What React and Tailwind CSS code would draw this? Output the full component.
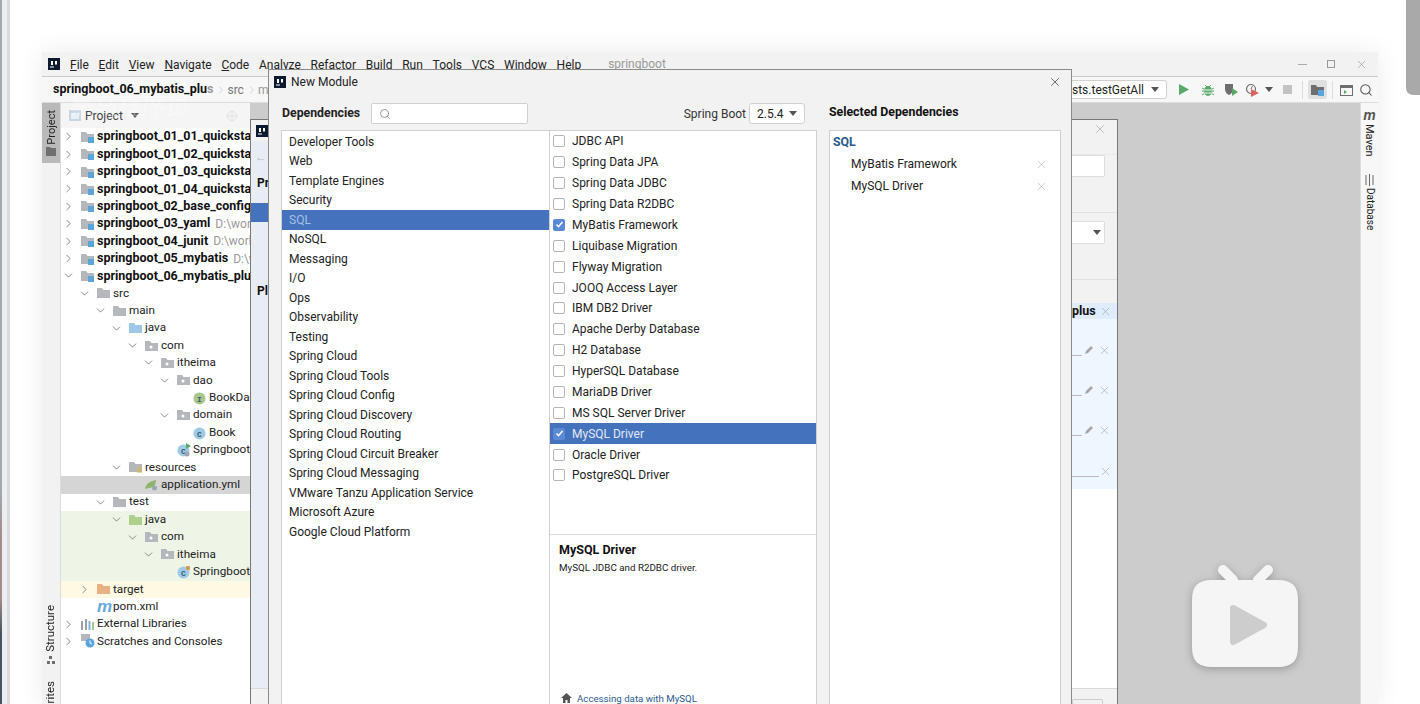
import React from 'react';
import { ChevronDown, ChevronRight, Search, X } from 'lucide-react';

const menus = [['F', 'ile'], ['E', 'dit'], ['V', 'iew'], ['N', 'avigate'], ['C', 'ode'], ['', 'Analyze'], ['', 'Refactor'], ['', 'Build'], ['', 'Run'], ['', 'Tools'], ['', 'VCS'], ['', 'Window'], ['', 'Help']];

const tree = [
  { d: 0, a: 'r', i: 'module', t: 'springboot_01_01_quickstart', b: true },
  { d: 0, a: 'r', i: 'module', t: 'springboot_01_02_quickstart', b: true },
  { d: 0, a: 'r', i: 'module', t: 'springboot_01_03_quickstart', b: true },
  { d: 0, a: 'r', i: 'module', t: 'springboot_01_04_quickstart', b: true },
  { d: 0, a: 'r', i: 'module', t: 'springboot_02_base_config', b: true },
  { d: 0, a: 'r', i: 'module', t: 'springboot_03_yaml', b: true, s: 'D:\\workspace' },
  { d: 0, a: 'r', i: 'module', t: 'springboot_04_junit', b: true, s: 'D:\\workspace' },
  { d: 0, a: 'r', i: 'module', t: 'springboot_05_mybatis', b: true, s: 'D:\\workspace' },
  { d: 0, a: 'd', i: 'module', t: 'springboot_06_mybatis_plus', b: true },
  { d: 1, a: 'd', i: 'gray', t: 'src' },
  { d: 2, a: 'd', i: 'gray', t: 'main' },
  { d: 3, a: 'd', i: 'blue', t: 'java' },
  { d: 4, a: 'd', i: 'pkg', t: 'com' },
  { d: 5, a: 'd', i: 'pkg', t: 'itheima' },
  { d: 6, a: 'd', i: 'pkg', t: 'dao' },
  { d: 7, i: 'iface', t: 'BookDao' },
  { d: 6, a: 'd', i: 'pkg', t: 'domain' },
  { d: 7, i: 'cls', t: 'Book' },
  { d: 6, i: 'boot', t: 'SpringbootApplication' },
  { d: 3, a: 'd', i: 'res', t: 'resources' },
  { d: 4, i: 'yml', t: 'application.yml', bg: 'bg-[#d5d5d5]' },
  { d: 2, a: 'd', i: 'gray', t: 'test' },
  { d: 3, a: 'd', i: 'green', t: 'java', bg: 'bg-[#eef5e6]' },
  { d: 4, a: 'd', i: 'pkg', t: 'com', bg: 'bg-[#eef5e6]' },
  { d: 5, a: 'd', i: 'pkg', t: 'itheima', bg: 'bg-[#eef5e6]' },
  { d: 6, i: 'test', t: 'SpringbootTests', bg: 'bg-[#eef5e6]' },
  { d: 1, a: 'r', i: 'orange', t: 'target', bg: 'bg-[#fdf9e3]' },
  { d: 1, i: 'pom', t: 'pom.xml' },
  { d: 0, a: 'r', i: 'libs', t: 'External Libraries' },
  { d: 0, a: 'r', i: 'scratch', t: 'Scratches and Consoles' },
];

const categories = ['Developer Tools', 'Web', 'Template Engines', 'Security', 'SQL', 'NoSQL', 'Messaging', 'I/O', 'Ops', 'Observability', 'Testing', 'Spring Cloud', 'Spring Cloud Tools', 'Spring Cloud Config', 'Spring Cloud Discovery', 'Spring Cloud Routing', 'Spring Cloud Circuit Breaker', 'Spring Cloud Messaging', 'VMware Tanzu Application Service', 'Microsoft Azure', 'Google Cloud Platform'];

const deps = [
  ['JDBC API'], ['Spring Data JPA'], ['Spring Data JDBC'], ['Spring Data R2DBC'], ['MyBatis Framework', true],
  ['Liquibase Migration'], ['Flyway Migration'], ['JOOQ Access Layer'], ['IBM DB2 Driver'], ['Apache Derby Database'],
  ['H2 Database'], ['HyperSQL Database'], ['MariaDB Driver'], ['MS SQL Server Driver'], ['MySQL Driver', true, true],
  ['Oracle Driver'], ['PostgreSQL Driver'],
];

const Folder = ({ color, children }) => (
  <svg width="13" height="12" viewBox="0 0 13 12" className="shrink-0">
    <path d="M0 1h5l1.5 2H13v8H0z" fill={color} />
    {children}
  </svg>
);

const Badge = ({ color, letter, children }) => (
  <svg width="14" height="14" viewBox="0 0 14 14" className="shrink-0">
    <circle cx="6.5" cy="7.5" r="6" fill={color} />
    <text x="6.5" y="10.5" textAnchor="middle" fontSize="8" fontWeight="700" fill="#3c5a70" fontFamily="Liberation Mono, monospace">{letter}</text>
    {children}
  </svg>
);

const TreeIcon = ({ name }) => {
  switch (name) {
    case 'module':
      return <Folder color="#b4b8bd"><rect x="7" y="6" width="6" height="6" fill="#5ba4dc" /></Folder>;
    case 'gray':
      return <Folder color="#b4b8bd" />;
    case 'blue':
      return <Folder color="#9cc9ea" />;
    case 'green':
      return <Folder color="#afcf8c" />;
    case 'orange':
      return <Folder color="#e8b183" />;
    case 'pkg':
      return <Folder color="#b4b8bd"><circle cx="6" cy="7" r="1.5" fill="#fff" /></Folder>;
    case 'res':
      return <Folder color="#b4b8bd"><path d="M8 7h5M8 9h5M8 11h5" stroke="#d9b53c" strokeWidth="1" /></Folder>;
    case 'iface':
      return <Badge color="#a9c78d" letter="I" />;
    case 'cls':
      return <Badge color="#9fcbe8" letter="C" />;
    case 'boot':
      return <Badge color="#9fcbe8" letter="C"><path d="M9 0l5 3-5 3z" fill="#59a869" /><circle cx="10" cy="11" r="2.5" fill="#9aa5ad" /></Badge>;
    case 'test':
      return <Badge color="#9fcbe8" letter="C"><path d="M9 1h4v4H9z" fill="#e2a05b" /><path d="M10 2l2 1-2 1z" fill="#59a869" /></Badge>;
    case 'yml':
      return (
        <svg width="13" height="12" viewBox="0 0 13 12" className="shrink-0">
          <path d="M0 10C1 4 6 2 11 1c0 5-3 8-7 8z" fill="#8fb46f" />
          <circle cx="9.5" cy="9" r="2.5" fill="#9aa5ad" />
        </svg>
      );
    case 'pom':
      return <span className="w-[13px] shrink-0 text-center font-['Liberation_Sans',sans-serif] text-[17px] leading-[14px] font-bold italic text-[#6aa9dc]">m</span>;
    case 'libs':
      return (
        <svg width="13" height="12" viewBox="0 0 13 12" className="shrink-0">
          <path d="M1 3v9M5 1v11" stroke="#9aa0a6" strokeWidth="2" />
          <path d="M8.5 3v9" stroke="#7fb2dc" strokeWidth="2" />
          <path d="M12 4v8" stroke="#a9c78d" strokeWidth="2" />
        </svg>
      );
    case 'scratch':
      return (
        <svg width="14" height="14" viewBox="0 0 14 14" className="shrink-0">
          <rect x="0" y="0" width="9" height="7" fill="#b4b8bd" />
          <circle cx="9" cy="9" r="4.5" fill="#5ba4dc" />
          <path d="M9 6.5V9l2 1" stroke="#fff" fill="none" />
        </svg>
      );
    default:
      return null;
  }
};

const IdeaLogo = () => (
  <svg width="12" height="12" viewBox="0 0 12 12" className="shrink-0">
    <rect width="12" height="12" fill="#0b1a2e" />
    <path d="M2 9h4" stroke="#fff" />
    <path d="M3 3h2v4H3zM7 3h2v3.5H7z" fill="#fff" />
  </svg>
);

const TreeRow = ({ row }) => (
  <div className={`flex h-[17.41px] items-center whitespace-nowrap ${row.bg || ''}`} style={{ paddingLeft: row.d * 16 }}>
    <span className="flex w-[14px] shrink-0 justify-center text-[#666]">
      {row.a === 'r' && <ChevronRight size={13} strokeWidth={1.4} />}
      {row.a === 'd' && <ChevronDown size={13} strokeWidth={1.4} />}
    </span>
    <span className="ml-[6px] flex w-[13px] shrink-0 justify-center"><TreeIcon name={row.i} /></span>
    <span className={`ml-[3px] ${row.b ? 'text-[12.5px] font-bold text-[#111]' : 'text-[11.7px] text-[#222]'}`}>{row.t}</span>
    {row.s && <span className="ml-[5px] text-[#999]">{row.s}</span>}
  </div>
);

const Checkbox = ({ checked }) => (
  checked ? (
    <span className="flex h-[12px] w-[12px] shrink-0 items-center justify-center rounded-[2px] bg-[#5a8ad6]">
      <svg width="9" height="9" viewBox="0 0 9 9"><path d="M1.5 4.5l2 2.2L7.5 2" stroke="#fff" strokeWidth="1.5" fill="none" /></svg>
    </span>
  ) : (
    <span className="h-[12px] w-[12px] shrink-0 rounded-[2px] border border-[#b4b4b4] bg-white" />
  )
);

const Caret = () => <span className="block h-0 w-0 shrink-0 border-x-[4px] border-t-[5px] border-x-transparent border-t-[#555]" />;

const SideLabel = ({ children, className }) => (
  <span className={`[writing-mode:vertical-rl] leading-none text-[#222] ${className || ''}`}>{children}</span>
);

const EnvRow = ({ pencil, lineW, className }) => (
  <div className={`flex h-[16px] items-start ${className || ''}`}>
    <span className="mt-[9px] h-px bg-[#bbb]" style={{ width: lineW }} />
    {pencil && (
      <svg width="10" height="10" viewBox="0 0 10 10" className="ml-[2px] mt-[-1px] shrink-0"><path d="M1 9l1-3 5-5 2 2-5 5z" fill="#a8a8a8" /></svg>
    )}
    <X size={13} strokeWidth={1} className={`mt-[-2px] text-[#999] ${pencil ? 'ml-[4px]' : 'ml-0'}`} />
  </div>
);

export default function App() {
  return (
    <div className="relative flex h-[704px] w-[1420px] overflow-hidden bg-white font-['Roboto',sans-serif] text-[12px] text-[#222]">
      {/* edge of the desktop behind the video player */}
      <div className="flex w-[10px] shrink-0">
        <div className="w-[2px] bg-[linear-gradient(to_bottom,#a3a8ae_0%,#a3a8ae_70%,#a58d88_76%,#a58d88_85%,#47545f_90%,#47545f_100%)]" />
        <div className="w-[5px] bg-[#eceff2]" />
        <div className="w-[3px] bg-[#dadada]" />
      </div>

      <div className="flex-1 pl-[32px] pr-[42px] pt-[52px]">
        {/* IDE window */}
        <div className="relative flex h-[652px] w-[1336px] flex-col bg-[#f2f2f2] shadow-[0_0_24px_rgba(0,0,0,0.08)]">
          {/* title bar */}
          <div className="flex h-[25px] shrink-0 items-center border-b border-[#c9c9c9] pl-[6px]">
            <IdeaLogo />
            <div className="ml-[10px] flex gap-[9.75px] whitespace-nowrap pt-[1px]">
              {menus.map(([u, rest]) => (
                <span key={u + rest}><span className="underline">{u}</span>{rest}</span>
              ))}
            </div>
            <span className="ml-[27px] text-[#999]">springboot</span>
            <div className="ml-auto flex items-center gap-[20px] pr-[10px] text-[#aaa]">
              <span className="h-px w-[9px] bg-[#aaa]" />
              <span className="h-[8px] w-[8px] border border-[#999]" />
              <X size={13} strokeWidth={1} className="text-[#888]" />
            </div>
          </div>

          {/* navigation bar and toolbar */}
          <div className="flex h-[26px] shrink-0 items-center whitespace-nowrap border-b border-[#dcdcdc] bg-[#f7f7f7] pl-[11px]">
            <span className="text-[12.5px] font-bold text-[#111]">springboot_06_mybatis_plu<span className="text-[#999]">s</span></span>
            <ChevronRight size={12} strokeWidth={1} className="ml-[2px] text-[#aaa]" />
            <span className="text-[#777]">src</span>
            <ChevronRight size={12} strokeWidth={1} className="ml-[2px] text-[#aaa]" />
            <span className="text-[#999]">main</span>

            <div className="ml-auto flex items-center pr-[5px]">
              <div className="flex h-[19px] w-[130px] items-center justify-end rounded-[3px] border border-[#d0d0d0] bg-white pr-[7px]">
                <span>ootTests.testGetAll</span>
                <span className="ml-[7px]"><Caret /></span>
              </div>
              <svg width="10" height="11" viewBox="0 0 10 11" className="ml-[12px]"><path d="M0 0l10 5.5L0 11z" fill="#59a869" /></svg>
              <svg width="12" height="12" viewBox="0 0 12 12" className="ml-[13px]">
                <ellipse cx="6" cy="7" rx="4" ry="5" fill="#59a869" />
                <path d="M0 4l3 1.5M12 4L9 5.5M0 7h2M12 7h-2M0 11l3-2M12 11L9 9M3 1l2 2M9 1L7 3" stroke="#59a869" />
                <path d="M2 6h8M2 9h8" stroke="#f7f7f7" />
              </svg>
              <svg width="14" height="13" viewBox="0 0 14 13" className="ml-[10px]">
                <path d="M1 1h8v6q-1 4-4 5-3-1-4-5z" fill="#6e6e6e" />
                <path d="M8 5l6 4-6 4z" fill="#59a869" />
              </svg>
              <svg width="14" height="14" viewBox="0 0 14 14" className="ml-[7px]">
                <circle cx="6" cy="6" r="4.5" fill="none" stroke="#6e6e6e" strokeWidth="1.2" />
                <path d="M6 6l1.5-3" stroke="#6e6e6e" />
                <path d="M6 6l8 4-8 4z" fill="#d9635e" />
              </svg>
              <span className="ml-[6px]"><Caret /></span>
              <span className="ml-[10px] h-[9px] w-[9px] bg-[#c2c2c2]" />
              <span className="ml-[10px] h-[18px] w-px bg-[#dcdcdc]" />
              <span className="ml-[5px] flex h-[19px] w-[19px] items-center justify-center rounded-[2px] bg-[#e0e0e0]">
                <svg width="13" height="12" viewBox="0 0 13 12">
                  <path d="M0 1h5l1 2h7v8H0z" fill="#6e6e6e" />
                  <rect x="7" y="6" width="6" height="6" fill="#5ba4dc" />
                </svg>
              </span>
              <span className="ml-[5px] h-[18px] w-px bg-[#dcdcdc]" />
              <svg width="13" height="12" viewBox="0 0 13 12" className="ml-[7px]">
                <rect x="0.5" y="1.5" width="12" height="10" fill="none" stroke="#6e6e6e" />
                <path d="M0 2h13v2H0z" fill="#6e6e6e" />
                <path d="M4 6l3 2-3 2z" fill="#59a869" />
              </svg>
              <Search size={14} strokeWidth={1.8} className="ml-[6px] text-[#555]" />
            </div>
          </div>

          {/* body */}
          <div className="flex min-h-0 flex-1">
            <div className="flex w-[19px] shrink-0 flex-col items-center overflow-hidden border-r border-[#dcdcdc]">
              <div className="flex h-[60px] w-full shrink-0 flex-col items-center justify-center gap-[3px] bg-[#b9b9b9]">
                <SideLabel className="rotate-180 text-[11px]">Project</SideLabel>
                <svg width="10" height="9" viewBox="0 0 10 9"><path d="M0 0h4l1 1h5v8H0z" fill="#6e6e6e" /></svg>
              </div>
              <div className="mt-[442px] flex shrink-0 flex-col items-center gap-[4px]">
                <SideLabel className="rotate-180 text-[11.5px]">Structure</SideLabel>
                <svg width="9" height="8" viewBox="0 0 9 8"><path d="M0 5h3v3H0zM5 5h3v3H5zM2 0h3v3H2z" fill="#6e6e6e" /></svg>
              </div>
              <div className="mt-[17px] shrink-0">
                <SideLabel className="rotate-180 text-[11.5px]">Favorites</SideLabel>
              </div>
            </div>

            <div className="flex w-[189px] shrink-0 flex-col overflow-hidden bg-white">
              <div className="flex h-[25px] shrink-0 items-center bg-[#f5f5f5] pl-[8px] pr-[12px]">
                <svg width="12" height="11" viewBox="0 0 12 11"><rect width="12" height="11" fill="#c9d6e2" /><rect x="2" y="3" width="8" height="6" fill="#e8f0f6" /></svg>
                <span className="ml-[4px] text-[#444]">Project</span>
                <span className="ml-[8px]"><Caret /></span>
                <svg width="12" height="12" viewBox="0 0 12 12" className="ml-auto"><circle cx="6" cy="6" r="4.5" fill="none" stroke="#e2e2e2" /><path d="M6 0v12M0 6h12" stroke="#e2e2e2" /></svg>
              </div>
              {tree.map((row, i) => <TreeRow key={i} row={row} />)}
            </div>

            <div className="flex-1 bg-[#cccccc]" />

            <div className="flex w-[18px] shrink-0 flex-col items-center gap-[2px] border-l border-[#dcdcdc] bg-[#f7f7f7] pt-[6px]">
              <span className="font-['Liberation_Sans',sans-serif] text-[14px] leading-[13px] font-bold italic text-[#555]">m</span>
              <SideLabel className="text-[11px]">Maven</SideLabel>
              <svg width="9" height="12" viewBox="0 0 9 12" className="mt-[15px]"><path d="M1 1v10M4.5 0v12M8 1v10" stroke="#666" fill="none" /></svg>
              <SideLabel className="text-[10px]">Database</SideLabel>
            </div>
          </div>

          {/* Project Structure dialog behind */}
          <div className="absolute left-[208px] top-[67px] flex h-[585px] w-[868px] border-x border-t border-[#777] bg-[#f2f2f2]">
            <div className="flex w-[17px] shrink-0 flex-col">
              <div className="flex h-[21px] shrink-0 items-center pl-[5px]"><IdeaLogo /></div>
              <div className="flex flex-1 flex-col bg-[#e8edf4]">
                <span className="mt-[7px] pl-[4px] text-[#bbb]">←</span>
                <span className="mt-[8px] pl-[6px] font-bold text-[#111]">Pr</span>
                <div className="mt-[11px] h-[19px] bg-[#4472bc]" />
                <span className="mt-[60px] pl-[6px] font-bold text-[#111]">Pl</span>
              </div>
              <div className="h-[16px] shrink-0 border-t border-[#d9d9d9]" />
            </div>
            <div className="w-[804px] shrink-0" />
            <div className="flex min-w-0 flex-1 flex-col">
              <div className="flex h-[35px] shrink-0 items-start justify-end border-b border-[#e9e9e9] pr-[10px] pt-[2px]">
                <X size={14} strokeWidth={1} className="text-[#999]" />
              </div>
              <div className="mr-[12px] mt-[-1px] h-[22px] shrink-0 translate-y-[1px] rounded-r-[2px] border border-l-0 border-[#ddd] bg-white" />
              <div className="mt-[36px] h-px shrink-0 bg-[#e0e0e0]" />
              <div className="mr-[12px] mt-[8px] flex h-[23px] shrink-0 items-center justify-end rounded-r-[2px] border border-l-0 border-[#ddd] bg-white pr-[3px]"><Caret /></div>
              <div className="mt-[35px] h-px shrink-0 bg-[#e0e0e0]" />
              <div className="mt-[23px] flex h-[16px] shrink-0 items-center bg-[#deecfb]">
                <span className="w-[27px] text-[12.5px] font-bold leading-none text-[#111]">plus</span>
                <X size={13} strokeWidth={1} className="text-[#999]" />
              </div>
              <div className="flex h-[170px] shrink-0 flex-col bg-[#eef6ff] pt-[27px]">
                <EnvRow pencil lineW={10} className="mb-[24px]" />
                <EnvRow pencil lineW={10} className="mb-[24px]" />
                <EnvRow pencil lineW={10} className="mb-[25px]" />
                <EnvRow lineW={27} />
              </div>
              <div className="flex-1 bg-white" />
              <div className="h-[16px] shrink-0 border-t border-[#d9d9d9] pl-0 pt-[10px]">
                <div className="mr-[14px] h-[8px] rounded-t-[2px] border border-b-0 border-[#ccc]" />
              </div>
            </div>
          </div>

          {/* New Module dialog */}
          <div className="absolute left-[226px] top-[17px] flex h-[635px] w-[804px] flex-col border-x border-t border-[#8a8a8a] bg-[#f2f2f2]">
            <div className="flex h-[24px] shrink-0 items-center pl-[5px] pr-[9px]">
              <IdeaLogo />
              <span className="ml-[5px]">New Module</span>
              <X size={14} strokeWidth={1.2} className="ml-auto text-[#333]" />
            </div>
            <div className="flex min-h-0 flex-1 pl-[12px] pt-[9px]">
              <div className="flex w-[536px] shrink-0 flex-col">
                <div className="flex h-[21px] shrink-0 items-center">
                  <span className="ml-[1px] w-[89px] text-[12.3px] font-bold text-[#222]">Dependencies</span>
                  <div className="flex h-[21px] w-[157px] items-center rounded-[2px] border border-[#d0d0d0] bg-white pl-[7px]">
                    <Search size={12} strokeWidth={1.5} className="text-[#777]" />
                  </div>
                  <span className="ml-auto text-[#333]">Spring Boot</span>
                  <div className="ml-[3px] mr-[12px] flex h-[21px] w-[56px] items-center justify-between rounded-[3px] border border-[#d0d0d0] bg-white pl-[7px] pr-[7px]">
                    <span>2.5.4</span>
                    <Caret />
                  </div>
                </div>
                <div className="mt-[6px] flex min-h-0 flex-1 border-x border-t border-[#cfcfcf] bg-white">
                  <div className="w-[268px] shrink-0 border-r border-[#cfcfcf] pt-[1px]">
                    {categories.map((c) => (
                      <div key={c} className={`flex h-[19.5px] items-center whitespace-nowrap pl-[7px] ${c === 'SQL' ? 'bg-[#4472bc] text-[#a9c0e6]' : ''}`}>{c}</div>
                    ))}
                  </div>
                  <div className="flex min-w-0 flex-1 flex-col">
                    <div className="h-[404px] shrink-0 border-b border-[#dcdcdc]">
                      {deps.map(([name, checked, selected]) => (
                        <div key={name} className={`flex h-[20.875px] items-center gap-[7px] whitespace-nowrap pl-[3px] ${selected ? 'bg-[#4472bc] text-[#e1e9f7]' : ''}`}>
                          <Checkbox checked={checked} />
                          <span>{name}</span>
                        </div>
                      ))}
                    </div>
                    <div className="flex flex-1 flex-col pl-[9px] pt-[6px]">
                      <span className="text-[12.5px] font-bold leading-[18px] text-[#111]">MySQL Driver</span>
                      <span className="text-[9.8px] leading-[18px]">MySQL JDBC and R2DBC driver.</span>
                      <div className="mt-auto flex h-[12px] shrink-0 items-start gap-[5px] pl-[2px] text-[9.7px] leading-[13px] text-[#2a5a8c]">
                        <svg width="11" height="10" viewBox="0 0 11 10" className="mt-[1px] shrink-0"><path d="M5.5 0L11 5H9v5H6.5V7h-2v3H2V5H0z" fill="#555" /></svg>
                        <span>Accessing data with MySQL</span>
                      </div>
                    </div>
                  </div>
                </div>
              </div>
              <div className="ml-[12px] flex w-[232px] shrink-0 flex-col">
                <div className="mt-[1px] h-[16px] shrink-0 text-[12.3px] font-bold leading-[16px] text-[#111]">Selected Dependencies</div>
                <div className="mt-[10px] flex-1 border-x border-t border-[#cfcfcf] bg-white pt-[3px]">
                  <div className="mb-[3px] pl-[3px] text-[12.3px] font-bold leading-[16px] text-[#2a5a8c]">SQL</div>
                  {['MyBatis Framework', 'MySQL Driver'].map((n) => (
                    <div key={n} className="flex h-[22px] items-center pl-[21px] pr-[12px]">
                      <span>{n}</span>
                      <X size={13} strokeWidth={1} className="ml-auto text-[#aaa]" />
                    </div>
                  ))}
                </div>
              </div>
            </div>
          </div>
        </div>
      </div>

      {/* video watermark */}
      <span className="absolute left-[70px] top-[90px] font-['Noto_Sans_CJK_SC',sans-serif] text-[24px] leading-[28px] text-white opacity-30">黑马程序员</span>

      {/* browser scrollbar */}
      <div className="absolute right-0 top-0 h-[95px] w-[14px] rounded-bl-[7px] bg-[#a9a9a9]" />

      {/* video player logo */}
      <svg width="110" height="106" viewBox="0 0 110 106" className="absolute left-[1190px] top-[564px] drop-shadow-[0_2px_4px_rgba(0,0,0,0.25)]">
        <path d="M33 6l10 10M78 6L68 16" stroke="#f5f5f5" strokeWidth="10" strokeLinecap="round" />
        <path d="M22 16h66c14 0 20 6 20 20v47c0 14-6 20-20 20H22c-14 0-20-6-20-20V36c0-14 6-20 20-20z" fill="#f5f5f5" />
        <path d="M43 44l31 17-31 17z" fill="#cdcdcd" stroke="#cdcdcd" strokeWidth="6" strokeLinejoin="round" />
      </svg>
    </div>
  );
}
